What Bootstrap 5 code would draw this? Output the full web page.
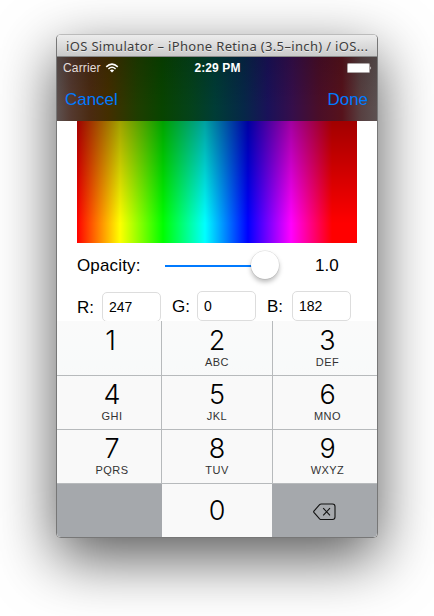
<!DOCTYPE html>
<html lang="en">
<head>
<meta charset="utf-8">
<meta name="viewport" content="width=device-width, initial-scale=1">
<title>iOS Simulator</title>
<link href="https://cdn.jsdelivr.net/npm/bootstrap@5.3.0/dist/css/bootstrap.min.css" rel="stylesheet">
<style>
body{background:#fff;font-family:"Liberation Sans",Arial,sans-serif;color:#000;height:616px;padding:34px 56px 0;overflow:hidden;line-height:1}
.sim-window{width:322px;height:504px;border:1px solid #777;border-top-color:#bbb;border-radius:5px;background:#fff;box-shadow:0 20px 60px rgba(0,0,0,.66)}
.sim-title{height:22px;background:linear-gradient(#ececec,#cacaca);border-bottom:1px solid #8a8a8a;font:13px/22px "Noto Sans","Open Sans",sans-serif;color:#3c3c3c;text-shadow:0 1px 0 rgba(255,255,255,.5);padding-left:9px;letter-spacing:.34px}
.top-bars{height:64px;color:#fff;background:linear-gradient(rgba(0,0,0,.14),transparent 80%),linear-gradient(90deg,#5d514f 0,#54392f 14px,#4a2a10 34px,#432e00 51px,#1f3d00 80px,#084400 105px,#04421c 135px,#003c36 158px,#062748 187px,#1a1159 211px,#350e4b 235px,#4a0e28 262px,#56121b 285px,#574041 304px,#5c5151 320px);flex:none}
.status-row{height:21px;padding:0 5px 0 6px;font-size:12px}
.status-row>*{flex:1 1 0}
.status-row .carrier{letter-spacing:.15px;color:#e3dedb}
.clock{font-weight:700;letter-spacing:.1px}
.nav-row{height:43px;padding:0 9px 0 8px;font-size:17px}
.nav-row a{color:#007aff;letter-spacing:-.05px}
.spectrum{height:122px;margin:0 20px;background:linear-gradient(rgba(0,0,0,.37),transparent 84%),linear-gradient(90deg,#f00 0,#ff0 43px,#0f0 86px,#0ff 128px,#00f 171px,#f0f 214px,#f00 255px)}
.opacity-row{height:44px;padding:0 20px;font-size:17px}
.opacity-label{width:64px;letter-spacing:.15px}
.slider-box{margin-left:24px;width:114px;height:28px}
.track{height:2px;width:88px;margin-top:1px;background:#007aff}
.thumb{width:28px;height:28px;margin-left:-2px;border-radius:50%;background:#fff;box-shadow:0 0 0 .5px rgba(0,0,0,.12),0 3px 5px rgba(0,0,0,.27)}
.alpha-value{margin-left:36px}
.rgb-row{height:34px;padding:4px 27px 0 20px;font-size:17px;overflow:hidden}
.rgb-row .chan{width:95px;height:30px}
.rgb-row .chan:last-child{width:84px}
.chan .form-control{width:59px;height:30px;font-size:14px;line-height:28px;padding:0 0 0 6px;border:1px solid #ddd;border-radius:5px;margin-left:auto;color:#000;letter-spacing:-.05px}
.chan:not(:last-child) .form-control{margin-right:11px}
.chan.red-chan{height:31px;padding-top:1px}
.keypad{display:grid;grid-template-columns:105px 111px 104px;grid-template-rows:55px 54px 54px 53px;background:linear-gradient(#fafafa,#f8fafa 45px,#f9f9f9 60px)}
.key{border-right:1px solid #b7babc;border-bottom:1px solid #b7babc;padding-top:5px}
.key:nth-child(n+4){padding-top:4px}
.key:nth-child(3n){border-right:0;padding-left:5px}
.key:nth-child(3n+1){padding-left:6px}
.key:first-child{padding-left:3px}
.key:nth-child(n+10){border:0}
.key .num{font:300 27px/29px Inter,Roboto,sans-serif}
.key .sub{font-size:11px;line-height:11px;color:#333;letter-spacing:.45px;margin-top:2px}
.key.gray{background:#a5a8ac}
.key.gray:last-child{padding:2px 0 0;margin-left:-1px}
.key.zero{padding-top:12px;padding-right:1px}
</style>
<script src="https://cdn.jsdelivr.net/npm/bootstrap@5.3.0/dist/js/bootstrap.bundle.min.js"></script>
</head>
<body>
<main class="sim-window d-flex flex-column overflow-hidden">
  <div class="sim-title text-nowrap flex-shrink-0">iOS Simulator – iPhone Retina (3.5–inch) / iOS...</div>
  <header class="top-bars">
    <div class="status-row d-flex align-items-center">
      <div class="carrier d-flex align-items-center">Carrier
        <svg class="ms-1" width="14" height="10" viewBox="0 0 14 10" fill="none" stroke="#fff" stroke-width="1.5"><path d="M1.2 3.9Q7-1.7 12.8 3.9M3.4 6Q7 2.6 10.6 6"/><path d="M7 9.6 4.9 7.4Q7 5.8 9.1 7.4Z" fill="#fff" stroke="none"/></svg>
      </div>
      <div class="clock text-center">2:29 PM</div>
      <div class="text-end d-flex justify-content-end">
        <svg width="25" height="10" viewBox="0 0 25 10"><rect width="23" height="10" rx="1.5" fill="#aaa3a3"/><rect x="1" y="1" width="21" height="8" rx=".6" fill="#fff"/><path d="M23.4 3.2Q25 5 23.4 6.8Z" fill="#fff"/></svg>
      </div>
    </div>
    <nav class="nav-row d-flex justify-content-between align-items-center">
      <a class="text-decoration-none">Cancel</a><a class="text-decoration-none">Done</a>
    </nav>
  </header>
  <div class="spectrum flex-shrink-0"></div>
  <div class="opacity-row d-flex align-items-center flex-shrink-0">
    <span class="opacity-label">Opacity:</span>
    <div class="slider-box d-flex align-items-center flex-shrink-0"><div class="track"></div><div class="thumb flex-shrink-0"></div></div>
    <span class="alpha-value">1.0</span>
  </div>
  <div class="rgb-row d-flex flex-shrink-0">
    <div class="chan red-chan d-flex align-items-center flex-shrink-0"><span>R:</span><div class="form-control flex-shrink-0">247</div></div>
    <div class="chan d-flex align-items-center flex-shrink-0"><span>G:</span><div class="form-control flex-shrink-0">0</div></div>
    <div class="chan d-flex align-items-center flex-shrink-0"><span>B:</span><div class="form-control flex-shrink-0">182</div></div>
  </div>
  <div class="keypad text-center flex-shrink-0">
    <div class="key"><div class="num">1</div></div>
    <div class="key"><div class="num">2</div><div class="sub">ABC</div></div>
    <div class="key"><div class="num">3</div><div class="sub">DEF</div></div>
    <div class="key"><div class="num">4</div><div class="sub">GHI</div></div>
    <div class="key"><div class="num">5</div><div class="sub">JKL</div></div>
    <div class="key"><div class="num">6</div><div class="sub">MNO</div></div>
    <div class="key"><div class="num">7</div><div class="sub">PQRS</div></div>
    <div class="key"><div class="num">8</div><div class="sub">TUV</div></div>
    <div class="key"><div class="num">9</div><div class="sub">WXYZ</div></div>
    <div class="key gray"></div>
    <div class="key zero"><div class="num">0</div></div>
    <div class="key gray d-flex align-items-center justify-content-center">
      <svg width="23" height="18" viewBox="0 0 23 18" fill="none" stroke="#111" stroke-width="1.1"><path d="M8.2 1H19.5Q22 1 22 3.5V14Q22 16.5 19.5 16.5H8.2Q7.3 16.5 6.6 15.8L.9 9.4Q.4 8.8 .9 8.1L6.6 1.7Q7.3 1 8.2 1ZM10.2 5.2 17 12.3M17 5.2 10.2 12.3"/></svg>
    </div>
  </div>
</main>
</body>
</html>
